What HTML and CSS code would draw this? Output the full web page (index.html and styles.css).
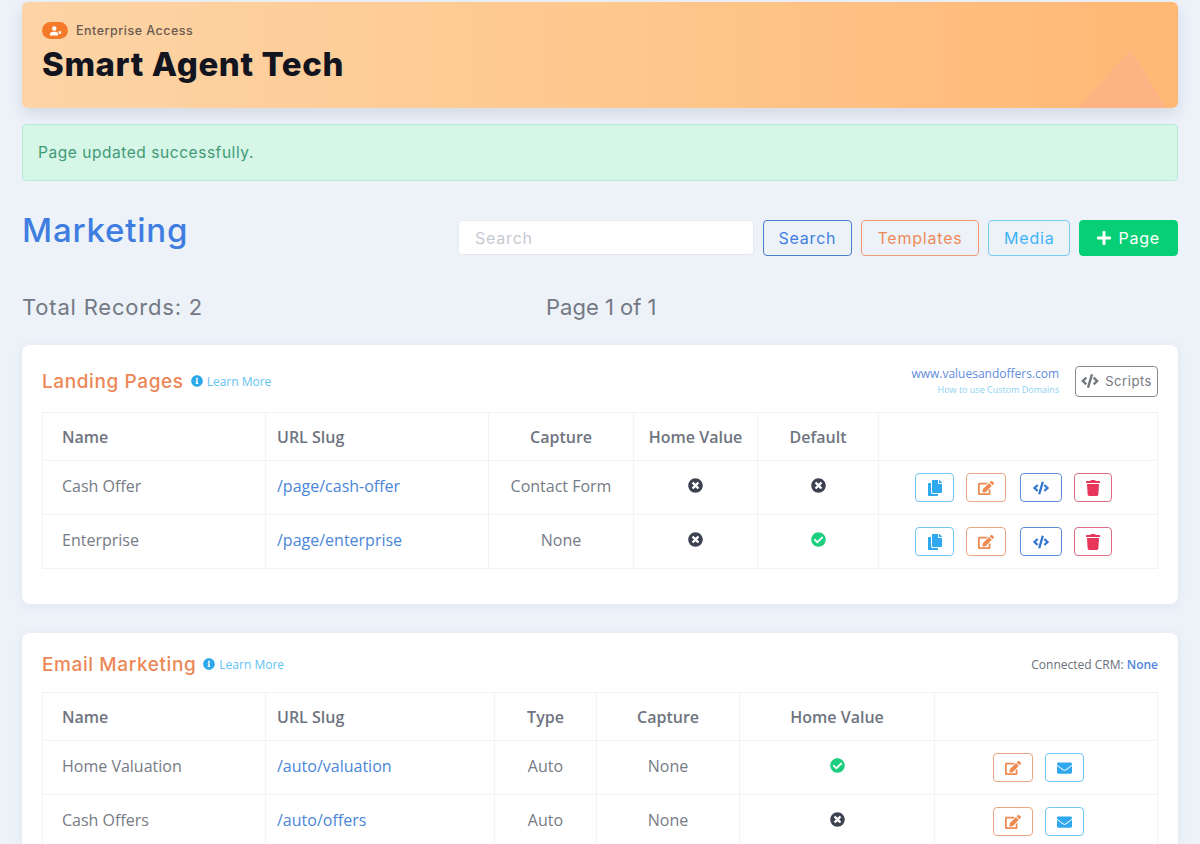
FILE: index.html
```html
<!DOCTYPE html>
<html lang="en">
<head>
    <meta charset="UTF-8">
    <meta name="viewport" content="width=device-width, initial-scale=1.0">
    <title>Marketing - Smart Agent Tech</title>
    <link rel="stylesheet" href="styles.css">
</head>
<body>
    <svg class="icon-defs" aria-hidden="true">
        <symbol id="i-times" viewBox="0 0 512 512"><path d="M256 8C119 8 8 119 8 256s111 248 248 248 248-111 248-248S393 8 256 8zm121.6 313.1c4.7 4.7 4.7 12.3 0 17L338 377.6c-4.7 4.7-12.3 4.7-17 0L256 312l-65.1 65.6c-4.7 4.7-12.3 4.7-17 0L134.4 338c-4.7-4.7-4.7-12.3 0-17l65.6-65-65.6-65.1c-4.7-4.7-4.7-12.3 0-17l39.6-39.6c4.7-4.7 12.3-4.7 17 0l65 65.7 65.1-65.6c4.7-4.7 12.3-4.7 17 0l39.6 39.6c4.7 4.7 4.7 12.3 0 17L312 256l65.6 65.1z"/></symbol>
        <symbol id="i-check" viewBox="0 0 512 512"><path d="M504 256c0 136.967-111.033 248-248 248S8 392.967 8 256 119.033 8 256 8s248 111.033 248 248zM227.314 387.314l184-184c6.248-6.248 6.248-16.379 0-22.627l-22.627-22.627c-6.248-6.249-16.379-6.249-22.628 0L216 308.118l-70.059-70.059c-6.248-6.248-16.379-6.248-22.628 0l-22.627 22.627c-6.248 6.248-6.248 16.379 0 22.627l104 104c6.249 6.249 16.379 6.249 22.628.001z"/></symbol>
        <symbol id="i-copy" viewBox="0 0 448 512"><path d="M320 448v40c0 13.255-10.745 24-24 24H24c-13.255 0-24-10.745-24-24V120c0-13.255 10.745-24 24-24h72v296c0 30.879 25.121 56 56 56h168zm0-344V0H152c-13.255 0-24 10.745-24 24v368c0 13.255 10.745 24 24 24h272c13.255 0 24-10.745 24-24V128H344c-13.2 0-24-10.8-24-24zm120.971-31.029L375.029 7.029A24 24 0 0 0 358.059 0H352v96h96v-6.059a24 24 0 0 0-7.029-16.97z"/></symbol>
        <symbol id="i-edit" viewBox="0 0 576 512"><path d="M402.6 83.2l90.2 90.2c3.8 3.8 3.8 10 0 13.8L274.4 405.6l-92.8 10.3c-12.4 1.4-22.9-9.1-21.5-21.5l10.3-92.8L388.8 83.2c3.8-3.8 10-3.8 13.8 0zm162-22.9l-48.8-48.8c-15.2-15.2-39.9-15.2-55.2 0l-35.4 35.4c-3.8 3.8-3.8 10 0 13.8l90.2 90.2c3.8 3.8 10 3.8 13.8 0l35.4-35.4c15.2-15.3 15.2-40 0-55.2zM384 346.2V448H64V128h229.8c3.2 0 6.2-1.3 8.5-3.5l40-40c7.6-7.6 2.2-20.5-8.5-20.5H48C21.5 64 0 85.5 0 112v352c0 26.5 21.5 48 48 48h352c26.5 0 48-21.5 48-48V306.2c0-10.7-12.9-16-20.5-8.5l-40 40c-2.2 2.3-3.5 5.3-3.5 8.5z"/></symbol>
        <symbol id="i-code" viewBox="0 0 640 512"><path d="M278.9 511.5l-61-17.7c-6.4-1.8-10-8.5-8.2-14.9L346.2 8.7c1.8-6.4 8.5-10 14.9-8.2l61 17.7c6.4 1.8 10 8.5 8.2 14.9L293.8 503.3c-1.9 6.4-8.5 10.1-14.9 8.2zm-114-112.2l43.5-46.4c4.6-4.9 4.3-12.7-.8-17.2L117 256l90.6-79.7c5.1-4.5 5.5-12.3.8-17.2l-43.5-46.4c-4.5-4.8-12.1-5.1-17-.5L3.8 247.2c-5.1 4.7-5.1 12.8 0 17.5l144.1 135.1c4.9 4.6 12.5 4.4 17-.5zm327.2.6l144.1-135.1c5.1-4.7 5.1-12.8 0-17.5L492.1 112.1c-4.8-4.5-12.4-4.3-17 .5L431.6 159c-4.6 4.9-4.3 12.7.8 17.2L523 256l-90.6 79.7c-5.1 4.5-5.5 12.3-.8 17.2l43.5 46.4c4.5 4.9 12.1 5.1 17 .6z"/></symbol>
        <symbol id="i-trash" viewBox="0 0 448 512"><path d="M432 32H312l-9.4-18.7A24 24 0 0 0 281.1 0H166.8a23.72 23.72 0 0 0-21.4 13.3L136 32H16A16 16 0 0 0 0 48v32a16 16 0 0 0 16 16h416a16 16 0 0 0 16-16V48a16 16 0 0 0-16-16zM53.2 467a48 48 0 0 0 47.9 45h245.8a48 48 0 0 0 47.9-45L416 128H32z"/></symbol>
        <symbol id="i-mail" viewBox="0 0 512 512"><path d="M502.3 190.8c3.9-3.1 9.7-.2 9.7 4.7V400c0 26.5-21.5 48-48 48H48c-26.5 0-48-21.5-48-48V195.6c0-5 5.7-7.8 9.7-4.7 22.4 17.4 52.1 39.5 154.1 113.6 21.1 15.4 56.7 47.8 92.2 47.6 35.7.3 72-32.8 92.3-47.6 102-74.1 131.6-96.3 154-113.7zM256 320c23.2.4 56.6-29.2 73.4-41.4 132.7-96.3 142.8-104.7 173.4-128.7 5.8-4.5 9.2-11.5 9.2-18.9v-19c0-26.5-21.5-48-48-48H48C21.5 64 0 85.5 0 112v19c0 7.4 3.4 14.3 9.2 18.9 30.6 23.9 40.7 32.4 173.4 128.7 16.8 12.2 50.2 41.8 73.4 41.4z"/></symbol>
        <symbol id="i-plus" viewBox="0 0 448 512"><path d="M416 208H272V64c0-17.67-14.33-32-32-32h-32c-17.67 0-32 14.33-32 32v144H32c-17.67 0-32 14.33-32 32v32c0 17.67 14.33 32 32 32h144v144c0 17.67 14.33 32 32 32h32c17.67 0 32-14.33 32-32V304h144c17.67 0 32-14.33 32-32v-32c0-17.67-14.33-32-32-32z"/></symbol>
        <symbol id="i-info" viewBox="0 0 512 512"><path d="M256 8C119.043 8 8 119.083 8 256c0 136.997 111.043 248 248 248s248-111.003 248-248C504 119.083 392.957 8 256 8zm0 110c23.196 0 42 18.804 42 42s-18.804 42-42 42-42-18.804-42-42 18.804-42 42-42zm56 254c0 6.627-5.373 12-12 12h-88c-6.627 0-12-5.373-12-12v-24c0-6.627 5.373-12 12-12h12v-64h-12c-6.627 0-12-5.373-12-12v-24c0-6.627 5.373-12 12-12h64c6.627 0 12 5.373 12 12v100h12c6.627 0 12 5.373 12 12v24z"/></symbol>
    </svg>

    <div class="container">
        <!-- Bandeau -->
        <div class="hero">
            <div class="hero-label">
                <span class="hero-badge">
                    <svg viewBox="0 0 20 16" class="hero-badge-icon"><circle cx="8" cy="4" r="3.6"/><path d="M1 15v-1.5C1 10.5 3.5 9 6 9h4c2.5 0 4 1.5 4 4.5V15z"/><path d="M15 8.5h4v4h-4z"/></svg>
                </span>
                <span>Enterprise Access</span>
            </div>
            <h1>Smart Agent Tech</h1>
            <div class="hero-peak"></div>
        </div>

        <div class="alert">Page updated successfully.</div>

        <!-- Barre de page -->
        <div class="page-head">
            <h2 class="page-title">Marketing</h2>
            <div class="page-actions">
                <input class="search-input" type="text" placeholder="Search">
                <button class="btn btn-blue">Search</button>
                <button class="btn btn-orange">Templates</button>
                <button class="btn btn-sky">Media</button>
                <button class="btn btn-green"><svg class="icon icon-plus"><use href="#i-plus"/></svg>Page</button>
            </div>
        </div>

        <div class="totals">
            <span class="totals-count">Total Records: 2</span>
            <span>Page 1 of 1</span>
        </div>

        <!-- Landing pages -->
        <section class="card card-landing">
            <div class="card-head">
                <div class="card-title">
                    <h3>Landing Pages</h3>
                    <a class="learn"><svg class="icon icon-info"><use href="#i-info"/></svg>Learn More</a>
                </div>
                <div class="card-tools">
                    <div class="domain">
                        <a class="domain-name">www.valuesandoffers.com</a>
                        <a class="domain-help">How to use Custom Domains</a>
                    </div>
                    <button class="btn-scripts"><svg class="icon icon-code-grey"><use href="#i-code"/></svg>Scripts</button>
                </div>
            </div>
            <table class="data-table">
                <colgroup>
                    <col class="c223"><col class="c223"><col class="c145"><col class="c124"><col class="c121"><col>
                </colgroup>
                <thead>
                    <tr><th class="left">Name</th><th class="left-slug">URL Slug</th><th>Capture</th><th>Home Value</th><th>Default</th><th></th></tr>
                </thead>
                <tbody>
                    <tr>
                        <td class="left">Cash Offer</td>
                        <td class="left-slug"><a class="slug">/page/cash-offer</a></td>
                        <td>Contact Form</td>
                        <td><svg class="flag flag-no"><use href="#i-times"/></svg></td>
                        <td><svg class="flag flag-no"><use href="#i-times"/></svg></td>
                        <td>
                            <div class="row-actions row-actions-wide">
                                <button class="act act-sky"><svg class="icon"><use href="#i-copy"/></svg></button>
                                <button class="act act-orange"><svg class="icon"><use href="#i-edit"/></svg></button>
                                <button class="act act-blue"><svg class="icon"><use href="#i-code"/></svg></button>
                                <button class="act act-red"><svg class="icon"><use href="#i-trash"/></svg></button>
                            </div>
                        </td>
                    </tr>
                    <tr>
                        <td class="left">Enterprise</td>
                        <td class="left-slug"><a class="slug">/page/enterprise</a></td>
                        <td>None</td>
                        <td><svg class="flag flag-no"><use href="#i-times"/></svg></td>
                        <td><svg class="flag flag-yes"><use href="#i-check"/></svg></td>
                        <td>
                            <div class="row-actions row-actions-wide">
                                <button class="act act-sky"><svg class="icon"><use href="#i-copy"/></svg></button>
                                <button class="act act-orange"><svg class="icon"><use href="#i-edit"/></svg></button>
                                <button class="act act-blue"><svg class="icon"><use href="#i-code"/></svg></button>
                                <button class="act act-red"><svg class="icon"><use href="#i-trash"/></svg></button>
                            </div>
                        </td>
                    </tr>
                </tbody>
            </table>
        </section>

        <!-- Email marketing -->
        <section class="card card-email">
            <div class="card-head">
                <div class="card-title">
                    <h3>Email Marketing</h3>
                    <a class="learn"><svg class="icon icon-info"><use href="#i-info"/></svg>Learn More</a>
                </div>
                <div class="crm">Connected CRM: <b>None</b></div>
            </div>
            <table class="data-table">
                <colgroup>
                    <col class="c223"><col class="c229"><col class="c102"><col class="c143"><col class="c195"><col>
                </colgroup>
                <thead>
                    <tr><th class="left">Name</th><th class="left-slug">URL Slug</th><th>Type</th><th>Capture</th><th>Home Value</th><th></th></tr>
                </thead>
                <tbody>
                    <tr>
                        <td class="left">Home Valuation</td>
                        <td class="left-slug"><a class="slug">/auto/valuation</a></td>
                        <td>Auto</td>
                        <td>None</td>
                        <td><svg class="flag flag-yes"><use href="#i-check"/></svg></td>
                        <td>
                            <div class="row-actions row-actions-short">
                                <button class="act act-orange"><svg class="icon"><use href="#i-edit"/></svg></button>
                                <button class="act act-sky"><svg class="icon icon-mail"><use href="#i-mail"/></svg></button>
                            </div>
                        </td>
                    </tr>
                    <tr>
                        <td class="left">Cash Offers</td>
                        <td class="left-slug"><a class="slug">/auto/offers</a></td>
                        <td>Auto</td>
                        <td>None</td>
                        <td><svg class="flag flag-no"><use href="#i-times"/></svg></td>
                        <td>
                            <div class="row-actions row-actions-short">
                                <button class="act act-orange"><svg class="icon"><use href="#i-edit"/></svg></button>
                                <button class="act act-sky"><svg class="icon icon-mail"><use href="#i-mail"/></svg></button>
                            </div>
                        </td>
                    </tr>
                </tbody>
            </table>
        </section>
    </div>
</body>
</html>
```

FILE: styles.css
```css
/* Styles de base */
html, body {
    height: 844px;
    overflow: hidden;
}

body {
    font-family: 'Open Sans', sans-serif;
    margin: 0;
    padding: 0;
    background-color: #edf2f9;
    color: #6e7480;
}

.icon-defs {
    display: none;
}

.icon {
    width: 16px;
    height: 16px;
    fill: currentColor;
    display: block;
}

.container {
    padding: 2px 22px 0;
}

/* Bandeau */
.hero {
    position: relative;
    height: 106px;
    padding: 20px 20px 0;
    box-sizing: border-box;
    border-radius: 6px;
    background: linear-gradient(90deg, #fdd4a6 0%, #fec88e 50%, #ffb774 100%);
    box-shadow: 0 6px 14px rgba(60, 70, 100, 0.14);
    overflow: hidden;
}

.hero-label {
    display: flex;
    align-items: center;
    gap: 8px;
    font-family: 'Inter', sans-serif;
    font-size: 12.5px;
    font-weight: 500;
    letter-spacing: 0.5px;
    color: #6b5a50;
}

.hero-badge {
    width: 26px;
    height: 17px;
    border-radius: 9px;
    background-color: #f47a2a;
    display: flex;
    align-items: center;
    justify-content: center;
}

.hero-badge-icon {
    width: 13px;
    height: 10px;
    fill: #fff;
}

.hero h1 {
    margin: 5px 0 0;
    font-family: 'Inter', sans-serif;
    font-size: 33px;
    line-height: 40px;
    font-weight: 800;
    letter-spacing: 0.6px;
    color: #12151f;
}

.hero-peak {
    position: absolute;
    right: 12px;
    bottom: 0;
    width: 88px;
    height: 58px;
    background-color: #feb385;
    clip-path: polygon(0 100%, 60% 0, 100% 100%);
}

/* Alerte */
.alert {
    margin-top: 16px;
    height: 57px;
    box-sizing: border-box;
    padding-left: 15px;
    display: flex;
    align-items: center;
    background-color: #d6f6e7;
    border: 1px solid #b9ecd4;
    border-radius: 4px;
    font-family: 'Inter', sans-serif;
    font-size: 15.5px;
    letter-spacing: 0.55px;
    color: #3f9a75;
}

/* Barre de page */
.page-head {
    margin-top: 28px;
    display: flex;
    justify-content: space-between;
    align-items: flex-start;
}

.page-title {
    margin: 0;
    font-family: 'Inter', sans-serif;
    font-size: 33px;
    line-height: 42px;
    font-weight: 500;
    letter-spacing: 0.8px;
    color: #3f7ee0;
}

.page-actions {
    display: flex;
    gap: 9px;
    margin-top: 11px;
}

.search-input {
    width: 296px;
    height: 35px;
    box-sizing: border-box;
    padding: 0 16px;
    border: 1px solid #e6e9ef;
    border-radius: 4px;
    background-color: #fff;
    font-family: 'Inter', sans-serif;
    font-size: 16px;
    letter-spacing: 0.8px;
    outline: none;
}

.search-input::placeholder {
    color: #c6cad2;
}

.btn {
    height: 36px;
    box-sizing: border-box;
    padding: 0 15px;
    border: 1px solid;
    border-radius: 4px;
    background: transparent;
    font-family: 'Inter', sans-serif;
    font-size: 16px;
    letter-spacing: 0.8px;
    display: flex;
    align-items: center;
}

.btn-blue {
    color: #3f7ee0;
    border-color: #4a7cc9;
    padding: 0 14.5px;
}

.btn-orange {
    color: #ee8a5a;
    border-color: #ee9a72;
    padding: 0 15.5px;
}

.btn-sky {
    color: #3db4f5;
    border-color: #7cc9f2;
}

.btn-green {
    color: #fff;
    border-color: #06cf75;
    background-color: #06cf75;
    padding: 0 17px;
    gap: 7px;
}

.icon-plus {
    width: 14px;
    height: 16px;
}

.totals {
    margin-top: 34px;
    display: flex;
    font-family: 'Inter', sans-serif;
    font-size: 22px;
    line-height: 34px;
    color: #737983;
}

.totals-count {
    width: 524px;
    letter-spacing: 0.8px;
}

/* Cartes */
.card {
    background-color: #fff;
    border-radius: 8px;
    box-shadow: 0 2px 10px rgba(70, 90, 130, 0.08);
    padding: 0 20px;
    box-sizing: border-box;
}

.card-landing {
    margin-top: 21px;
    height: 259px;
}

.card-email {
    margin-top: 29px;
    height: 260px;
}

.card-head {
    display: flex;
    justify-content: space-between;
    align-items: center;
    box-sizing: border-box;
}

.card-landing .card-head {
    height: 67px;
    padding-top: 5px;
}

.card-email .card-head {
    height: 59px;
    padding-top: 3px;
}

.card-title {
    display: flex;
    align-items: center;
    gap: 7px;
}

.card-title h3 {
    margin: 0;
    font-family: 'Inter', sans-serif;
    font-size: 19px;
    font-weight: 500;
    letter-spacing: 0.6px;
    color: #ec8757;
}

.learn {
    display: flex;
    align-items: center;
    gap: 4px;
    font-size: 12px;
    color: #62c3f5;
}

.icon-info {
    width: 12px;
    height: 12px;
    color: #2ba7ec;
}

.card-tools {
    display: flex;
    align-items: center;
    gap: 16px;
}

.domain {
    display: flex;
    flex-direction: column;
    align-items: flex-end;
}

.domain-name {
    font-size: 12px;
    line-height: 16px;
    color: #5f8cdc;
}

.domain-help {
    font-size: 9px;
    line-height: 15px;
    color: #8ed0f5;
}

.btn-scripts {
    height: 31px;
    padding: 0 5px;
    display: flex;
    align-items: center;
    gap: 6px;
    background: #fff;
    border: 1px solid #878c94;
    border-radius: 4px;
    font-family: 'Inter', sans-serif;
    font-size: 13px;
    letter-spacing: 0.55px;
    color: #74787f;
}

.icon-code-grey {
    width: 18px;
    height: 14px;
}

.crm {
    font-size: 12px;
    color: #6a6f78;
}

.crm b {
    color: #4f86dc;
    font-weight: 600;
}

/* Tableaux */
.data-table {
    width: 1116px;
    table-layout: fixed;
    border-collapse: collapse;
    font-size: 16px;
}

.data-table th,
.data-table td {
    border: 1px solid #f1f3f6;
    text-align: center;
    padding: 0;
    box-sizing: border-box;
}

.data-table th {
    height: 48px;
    font-weight: 600;
    color: #6e7480;
}

.data-table td {
    height: 54px;
    padding-bottom: 4px;
    color: #767b85;
}

.data-table .left {
    text-align: left;
    padding-left: 19px;
}

.data-table .left-slug {
    text-align: left;
    padding-left: 11px;
}

.c102 { width: 102px; }
.c121 { width: 121px; }
.c124 { width: 124px; }
.c143 { width: 143px; }
.c145 { width: 145px; }
.c195 { width: 195px; }
.c223 { width: 223px; }
.c229 { width: 229px; }

.slug {
    color: #4a86d8;
}

.flag {
    width: 15px;
    height: 15px;
    display: block;
    margin: 0 auto;
}

.flag-no {
    fill: #3d4250;
}

.flag-yes {
    fill: #1ccf7e;
}

.row-actions {
    display: flex;
    justify-content: center;
    gap: 12px;
    padding-top: 4px;
}

.row-actions-wide {
    padding-right: 9px;
}

.row-actions-short {
    padding-right: 16px;
}

.act {
    width: 40px;
    height: 29px;
    padding: 0;
    border: 1px solid;
    border-radius: 4px;
    background: transparent;
    display: flex;
    align-items: center;
    justify-content: center;
}

.act-sky {
    color: #2fa8f0;
    border-color: #72c6f2;
    width: 39px;
}

.act-orange {
    color: #ee8a50;
    border-color: #eca581;
}

.act-blue {
    color: #2f74d0;
    border-color: #5b8ed6;
    width: 42px;
    margin-left: 2px;
}

.act-red {
    color: #e8365a;
    border-color: #dc6d84;
    width: 38px;
}

.icon-mail {
    width: 15px;
}
```
